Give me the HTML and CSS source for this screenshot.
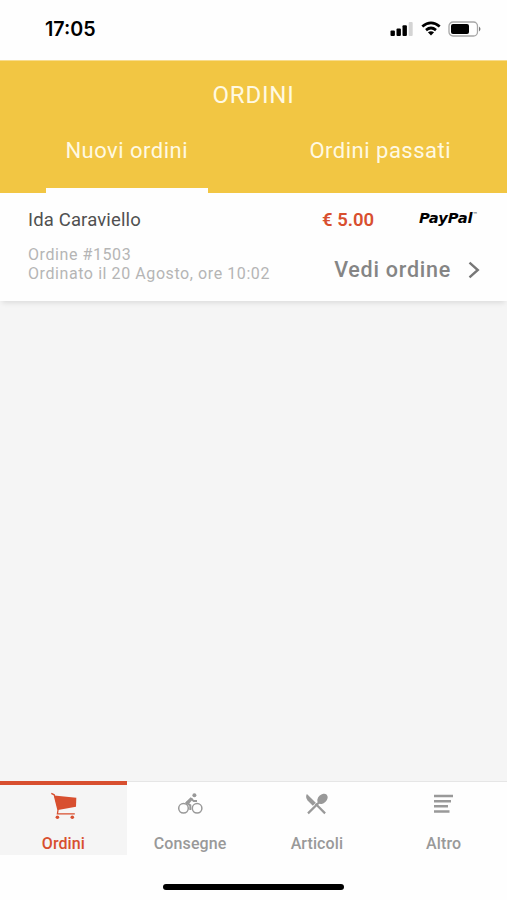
FILE: index.html
```html
<!DOCTYPE html>
<html lang="it">

<head>
    <meta charset="utf-8">
    <meta name="viewport" content="width=device-width, initial-scale=1">
    <title>Ordini</title>

    <link rel="stylesheet" href="styles.css">
</head>

<body>

    <div class="status-bar">
        <span class="time">17:05</span>
        <div class="status-icons">
            <svg width="24" height="16" viewBox="0 0 24 16">
                <rect x="0.5" y="9.5" width="4.4" height="5.5" rx="1"/>
                <rect x="6.5" y="7.5" width="4.4" height="7.5" rx="1"/>
                <rect x="12.5" y="4.2" width="4.4" height="10.8" rx="1"/>
                <rect x="18.7" y="1" width="4" height="14" rx="1" fill="#d4d4d4"/>
            </svg>
            <svg width="20" height="16" viewBox="0 0 20 16">
                <path d="M1.3 5.6Q10-2 18.7 5.6M5 9.1Q10 4.9 15 9.1" fill="none" stroke="#000" stroke-width="2.7"/>
                <path d="M6.9 11.3Q10 9 13.1 11.3L10 14.6Z"/>
            </svg>
            <svg width="34" height="16" viewBox="0 0 34 16">
                <rect x="1" y="1" width="28.5" height="14" rx="4" fill="#fff" stroke="#a6a6a6" stroke-width="1.3"/>
                <rect x="3" y="3" width="18" height="10" rx="2"/>
                <path d="M31 5.5Q34 8 31 10.5Z" fill="#777"/>
            </svg>
        </div>
    </div>

    <header>
        <h1>ORDINI</h1>
        <nav class="tabs">
            <a class="tab tab-active"><span>Nuovi ordini</span></a>
            <a class="tab"><span>Ordini passati</span></a>
        </nav>
    </header>

    <main>
        <div class="order">
            <div class="order-row">
                <span class="customer">Ida Caraviello</span>
                <span class="price">€ 5.00</span>
                <span class="paypal">PayPal<sup>™</sup></span>
            </div>
            <div class="order-row order-details">
                <p>Ordine #1503<br>Ordinato il 20 Agosto, ore 10:02</p>
                <a class="view">Vedi ordine
                    <svg width="12" height="18" viewBox="0 0 12 18">
                        <path d="M1.5 1.6L9.8 9L1.5 16.4" fill="none" stroke="#777" stroke-width="2.4"/>
                    </svg>
                </a>
            </div>
        </div>
    </main>

    <footer>
        <nav class="menu">
            <a class="item item-active">
                <svg width="28" height="28" viewBox="0 0 28 28">
                    <path d="M5.2 3.6L27.3 5.8L27 14.8L9 18Z"/>
                    <path d="M2.3 1.3L5.2 2.8L9 18L8.4 21.8H25.8" fill="none" stroke="#d84f2f" stroke-width="1.3"/>
                    <circle cx="8.4" cy="25.3" r="1.8"/>
                    <circle cx="23.3" cy="25.3" r="1.8"/>
                </svg>
                <span>Ordini</span>
            </a>
            <a class="item">
                <svg width="28" height="28" viewBox="0 0 28 28">
                    <g fill="none" stroke="#999" stroke-width="1.5">
                        <circle cx="7.5" cy="16.3" r="4.8"/>
                        <circle cx="21.1" cy="16.3" r="4.8"/>
                    </g>
                    <path d="M15.5 6.5L10.5 10.8L14.3 13.4V18M15.5 7L17.7 9.1H21" fill="none" stroke="#999" stroke-width="2"/>
                    <path d="M9.4 10.4L14.7 5.2L17 7L13.3 11.4Z"/>
                    <circle cx="18.4" cy="3.2" r="2"/>
                </svg>
                <span>Consegne</span>
            </a>
            <a class="item">
                <svg width="28" height="28" viewBox="0 0 28 28">
                    <path d="M3.9 2.1L12.8 10.8L9.8 13.8L4.6 8.6Q2 5.3 3.9 2.1Z"/>
                    <ellipse cx="19.5" cy="6.8" rx="4.3" ry="5.9" transform="rotate(45 19.5 6.8)"/>
                    <path d="M17 9.5L5 21.4M12.5 11.8L22.1 21.4" fill="none" stroke="#999" stroke-width="2.2"/>
                </svg>
                <span>Articoli</span>
            </a>
            <a class="item">
                <svg width="28" height="28" viewBox="0 0 28 28">
                    <path d="M4 4H23M4 9.2H21M4 14.3H18M4 19.5H19.5" fill="none" stroke="#999" stroke-width="2.5"/>
                </svg>
                <span>Altro</span>
            </a>
        </nav>
        <div class="home-bar"></div>
    </footer>

</body>

</html>
```
FILE: styles.css
```css
* {
    box-sizing: border-box;
}

body {
    margin: 0;
    height: 900px;
    display: flex;
    flex-direction: column;
    overflow: hidden;
    background: #f5f5f5;
    font-family: Roboto, sans-serif;
}

svg {
    display: block;
    fill: currentColor;
}

/* Status bar */
.status-bar {
    height: 60px;
    padding: 0 25px 3px 45px;
    display: flex;
    align-items: center;
    justify-content: space-between;
    background: #fefefe;
    color: #000;
}

.time {
    padding-top: 1px;
    font: 600 19.7px Inter, sans-serif;
}

.status-icons {
    display: flex;
    gap: 7px;
}

/* Header with the two tabs */
header {
    height: 133px;
    display: flex;
    flex-direction: column;
    border-top: 1px solid #f8dc8d;
    background: #f2c643;
    color: #fff9e2;
}

h1 {
    margin: 0;
    padding-top: 20px;
    font-size: 24px;
    font-weight: 400;
    line-height: 28px;
    letter-spacing: .8px;
    text-align: center;
}

.tabs {
    flex: 1;
    display: grid;
    grid-template-columns: 1fr 1fr;
}

.tab {
    display: flex;
    justify-content: center;
    padding-top: 28px;
    font-size: 22px;
    line-height: 28px;
    letter-spacing: .5px;
}

.tab-active span {
    width: 162px;
    border-bottom: 5px solid #fefefe;
    text-align: center;
}

/* Order card */
main {
    flex: 1;
}

.order {
    height: 108px;
    padding: 14px 27px 0 28px;
    background: #fefefe;
    box-shadow: 0 4px 5px -2px rgba(0, 0, 0, .1);
}

.order-row {
    display: flex;
    align-items: center;
}

.customer {
    width: 294px;
    color: #505050;
    font-size: 18.5px;
    line-height: 26px;
    letter-spacing: .15px;
}

.price {
    width: 97px;
    color: #d84f2f;
    font-size: 18.5px;
    font-weight: 600;
}

.paypal {
    padding-bottom: 4px;
    color: #000;
    font: italic 700 14.7px/22px "DejaVu Sans", sans-serif;
    white-space: nowrap;
}

.paypal sup {
    font-size: 5px;
    font-weight: 400;
    line-height: 0;
    vertical-align: 7px;
}

.order-details {
    justify-content: space-between;
    padding-top: 11px;
}

.order-details p {
    margin: 0;
    color: #b5b5b5;
    font-size: 16px;
    line-height: 19px;
    letter-spacing: .58px;
}

.view {
    display: flex;
    align-items: center;
    gap: 17px;
    padding-top: 13px;
    color: #858585;
    font-size: 21.5px;
    font-weight: 500;
    line-height: 26px;
    letter-spacing: .75px;
}

/* Bottom menu */
footer {
    height: 119px;
    background: #fefefe;
}

.menu {
    height: 74px;
    display: grid;
    grid-template-columns: repeat(4, 1fr);
}

.item {
    display: flex;
    flex-direction: column;
    align-items: center;
    justify-content: space-between;
    padding: 10px 0 0;
    border-top: 1px solid #e6e6e6;
    color: #999;
    font-size: 16px;
    font-weight: 500;
    line-height: 22px;
    letter-spacing: .1px;
}

.item-active {
    padding-top: 7px;
    border-top: 4px solid #d84f2f;
    background: #f5f5f5;
    color: #d84f2f;
}

.home-bar {
    width: 181px;
    height: 6px;
    margin: 29px auto 0;
    border-radius: 3px;
    background: #000;
}
```
